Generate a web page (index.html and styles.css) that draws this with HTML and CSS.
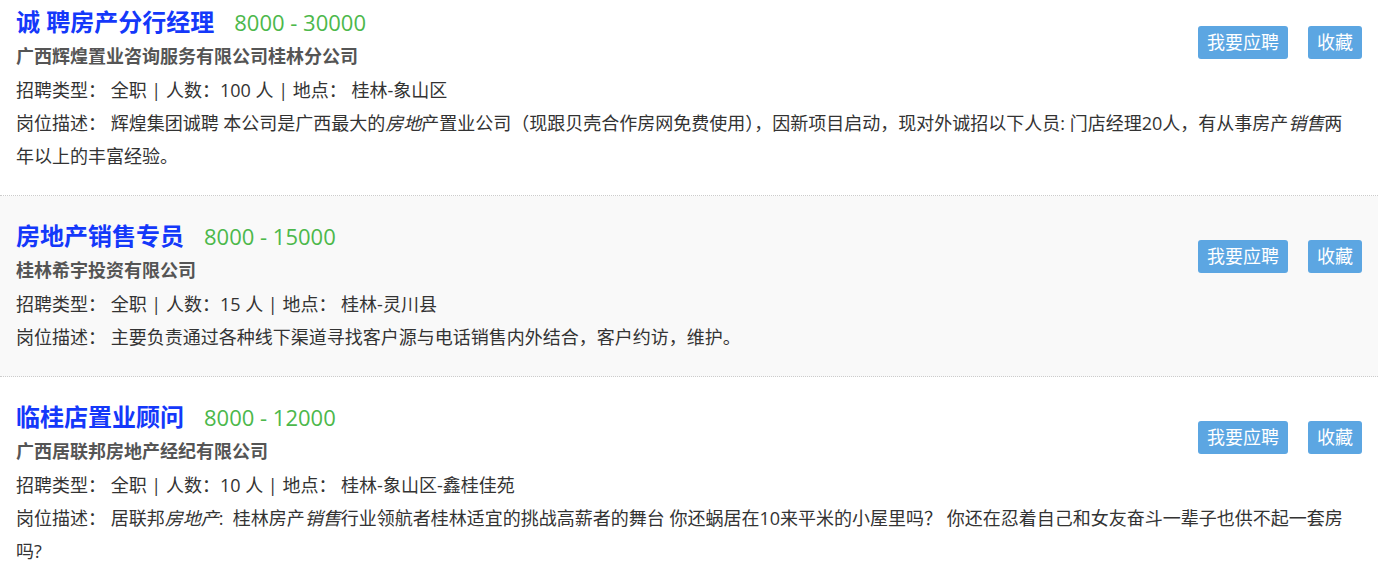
FILE: index.html
```html
<!DOCTYPE html>
<html lang="zh-CN">
<head>
    <meta charset="UTF-8">
    <meta name="viewport" content="width=device-width, initial-scale=1.0">
    <title>招聘列表</title>
    <link rel="stylesheet" href="styles.css">
</head>
<body>

    <div class="job-list">
        <div class="job">
            <div class="actions">
                <a class="btn" href="#">我要应聘</a>
                <a class="btn" href="#">收藏</a>
            </div>
            <h3 class="title"><a href="#">诚 聘房产分行经理</a><span class="salary">8000 - 30000</span></h3>
            <div class="company">广西辉煌置业咨询服务有限公司桂林分公司</div>
            <p class="info">招聘类型： 全职 | 人数：100 人 | 地点： 桂林-象山区</p>
            <p class="desc">岗位描述： 辉煌集团诚聘 本公司是广西最大的<em>房地</em>产置业公司（现跟贝壳合作房网免费使用），因新项目启动，现对外诚招以下人员: 门店经理20人，有从事房产<em>销售</em>两年以上的丰富经验。</p>
        </div>

        <div class="job">
            <div class="actions">
                <a class="btn" href="#">我要应聘</a>
                <a class="btn" href="#">收藏</a>
            </div>
            <h3 class="title"><a href="#">房地产销售专员</a><span class="salary">8000 - 15000</span></h3>
            <div class="company">桂林希宇投资有限公司</div>
            <p class="info">招聘类型： 全职 | 人数：15 人 | 地点： 桂林-灵川县</p>
            <p class="desc">岗位描述： 主要负责通过各种线下渠道寻找客户源与电话销售内外结合，客户约访，维护。</p>
        </div>

        <div class="job">
            <div class="actions">
                <a class="btn" href="#">我要应聘</a>
                <a class="btn" href="#">收藏</a>
            </div>
            <h3 class="title"><a href="#">临桂店置业顾问</a><span class="salary">8000 - 12000</span></h3>
            <div class="company">广西居联邦房地产经纪有限公司</div>
            <p class="info">招聘类型： 全职 | 人数：10 人 | 地点： 桂林-象山区-鑫桂佳苑</p>
            <p class="desc">岗位描述： 居联邦<em>房地产</em>:&nbsp; 桂林房产<em>销售</em>行业领航者桂林适宜的挑战高薪者的舞台 你还蜗居在10来平米的小屋里吗？ 你还在忍着自己和女友奋斗一辈子也供不起一套房吗?</p>
        </div>
    </div>

</body>
</html>
```

FILE: styles.css
```css
body {
    margin: 0;
    font-family: "Open Sans", "Noto Sans CJK SC", sans-serif;
    font-size: 18px;
    color: #333;
    background-color: #fff;
}

.job-list {
    width: 1378px;
}

.job {
    padding: 23px 16px 22px;
    border-bottom: 1px dotted #ccc;
}

.job:first-child {
    padding-top: 5px;
}

.job:nth-child(even) {
    background-color: #f9f9f9;
}

/* 右侧按钮 */
.actions {
    float: right;
    display: flex;
    gap: 20px;
    margin-top: 21px;
}

.btn {
    display: block;
    height: 33px;
    line-height: 33px;
    padding: 0 9px;
    font-size: 18px;
    color: #fff;
    text-decoration: none;
    background-color: #5ca6e2;
    border-radius: 3px;
}

.title {
    margin: 0;
    font-size: 24px;
    line-height: 34px;
}

.title a {
    color: #1438fa;
    text-decoration: none;
}

.salary {
    margin-left: 20px;
    font-size: 22px;
    font-weight: normal;
    color: #4cb84b;
}

.company {
    font-weight: bold;
    line-height: 34px;
    color: #555;
}

.info {
    margin: 0;
    line-height: 34px;
}

.desc {
    margin: 0;
    padding-right: 8px;
    line-height: 33px;
}
```
